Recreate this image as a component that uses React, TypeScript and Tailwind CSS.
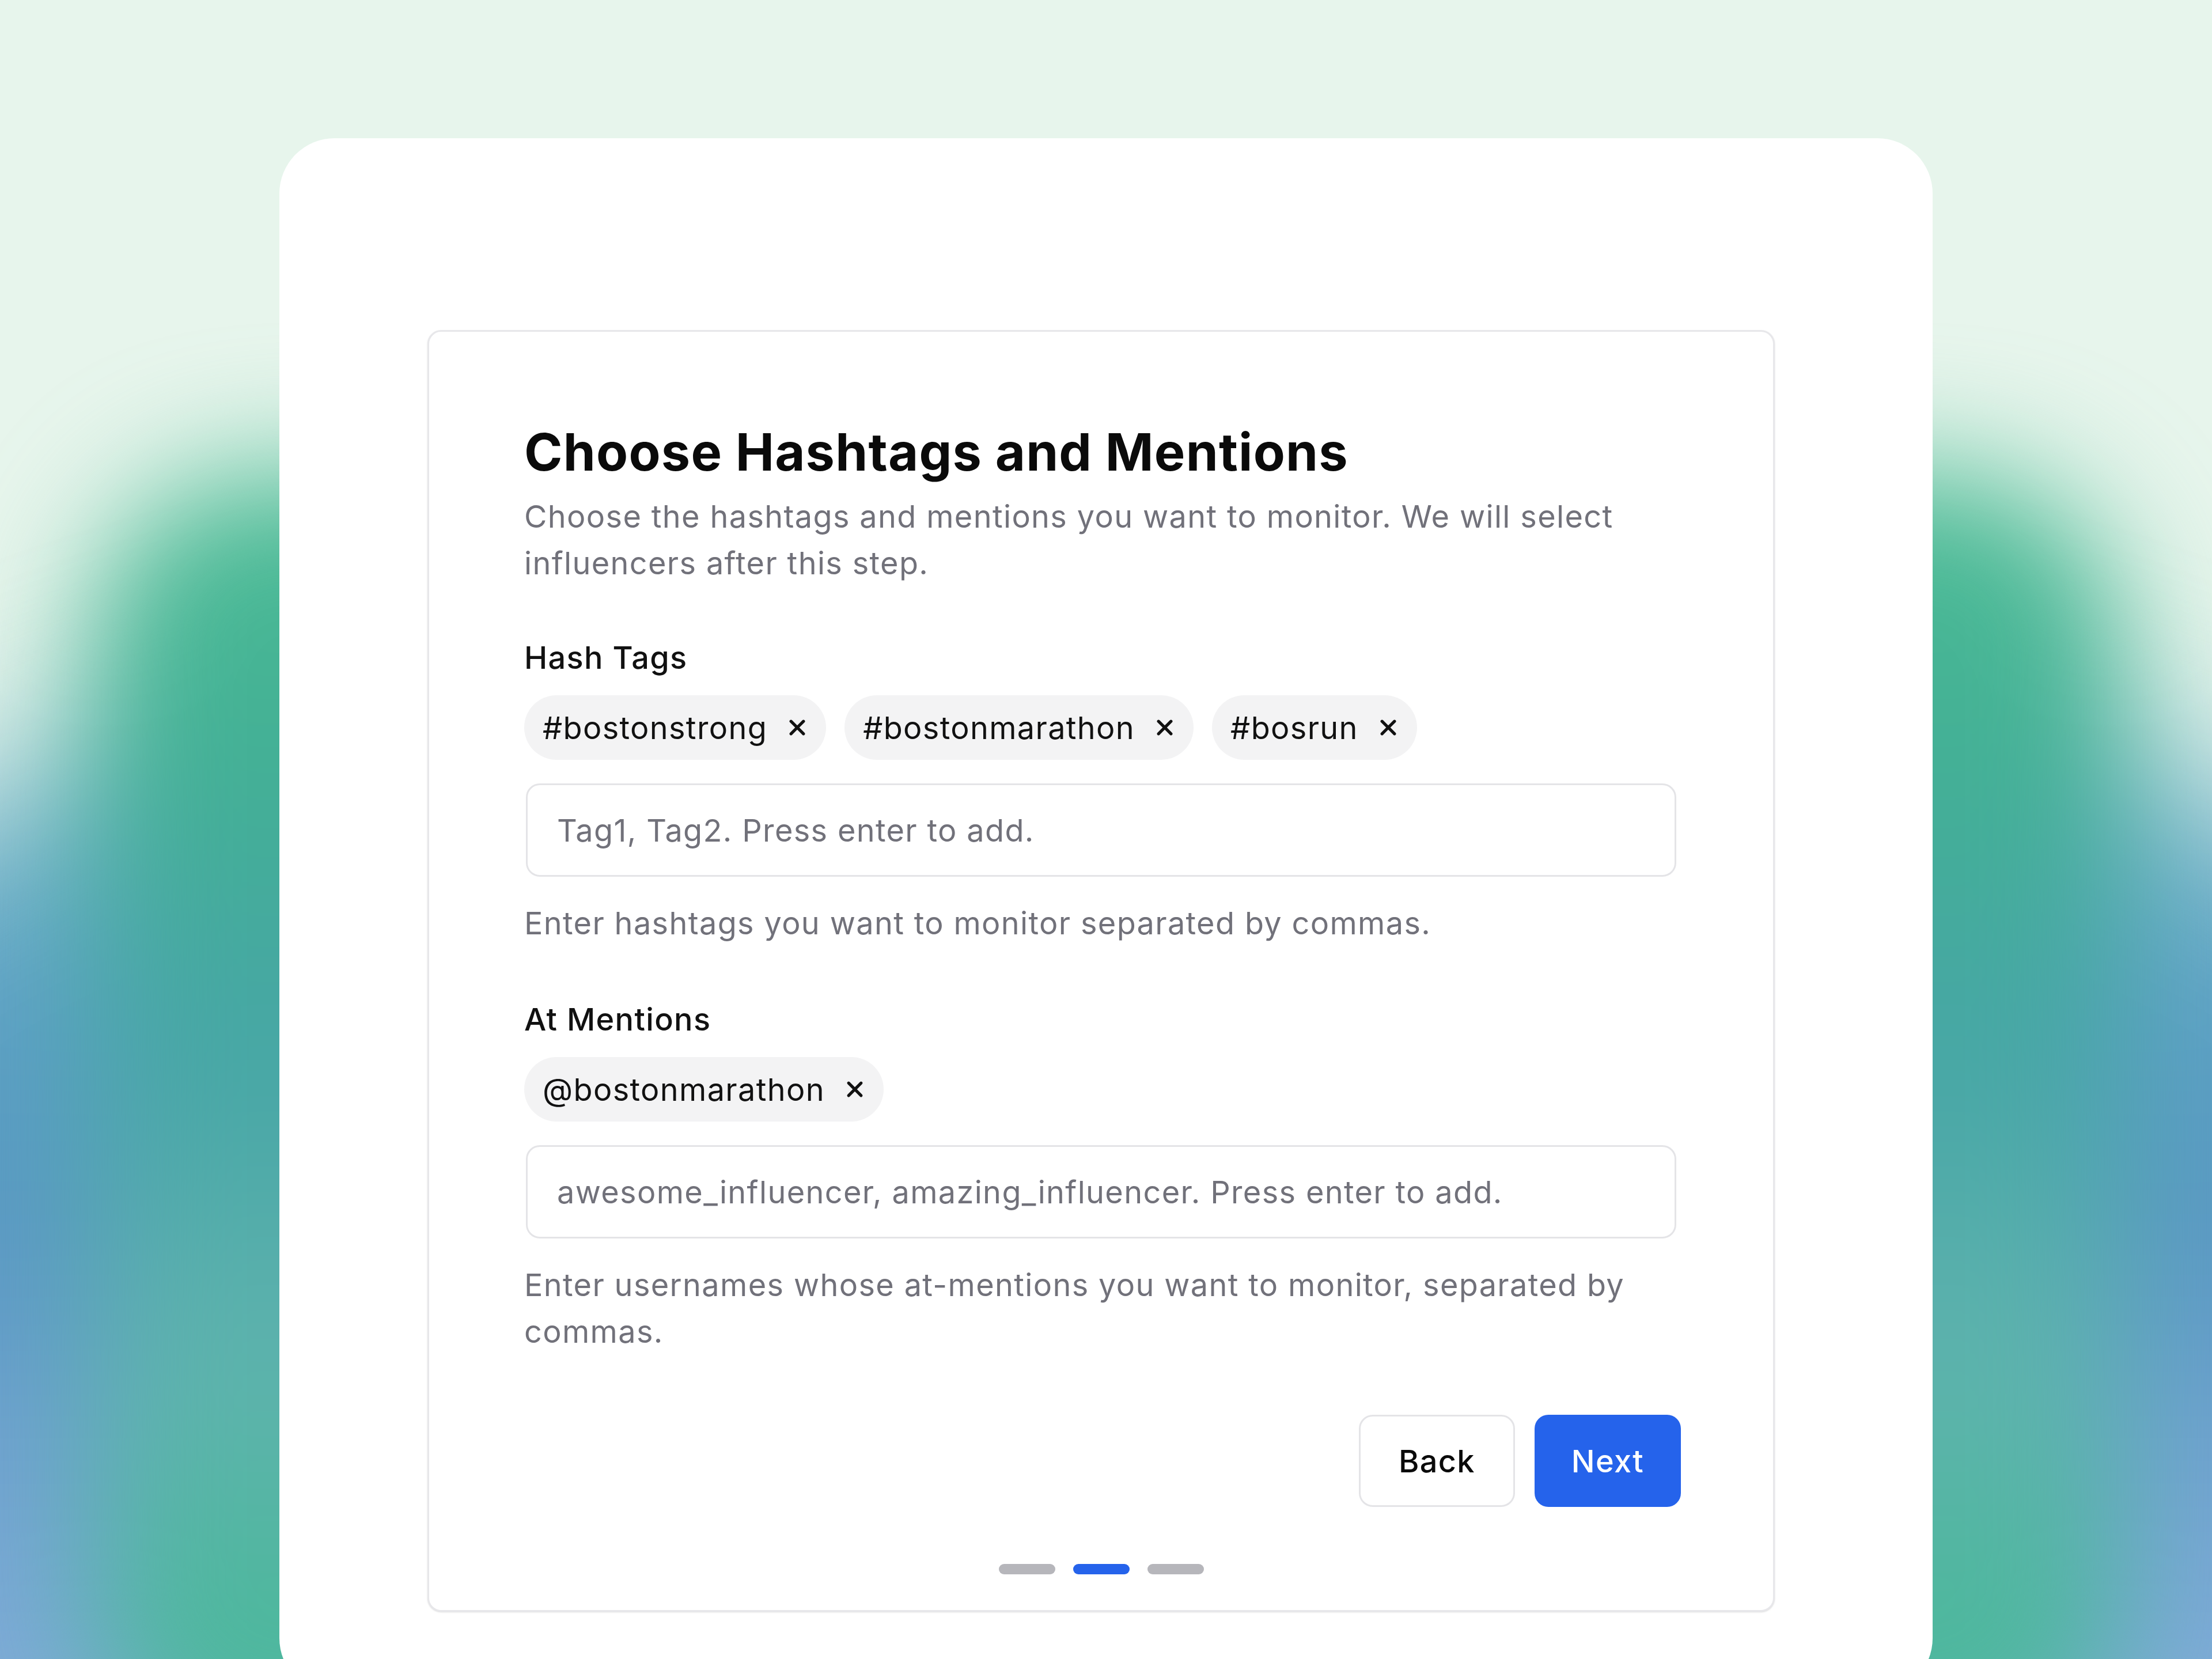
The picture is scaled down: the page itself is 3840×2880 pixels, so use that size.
import React, { useState } from 'react'

type Chip = { id: string; label: string }

const initialTags: Chip[] = [
  { id: 'h1', label: '#bostonstrong' },
  { id: 'h2', label: '#bostonmarathon' },
  { id: 'h3', label: '#bosrun' },
]

const initialMentions: Chip[] = [{ id: 'm1', label: '@bostonmarathon' }]

function CloseIcon() {
  return (
    <svg viewBox="0 0 24 24" className="w-[52px] h-[52px]" fill="none" stroke="currentColor" strokeWidth={2.4} strokeLinecap="round">
      <path d="M7 7l10 10M17 7L7 17" />
    </svg>
  )
}

function TagChip({ chip, onRemove }: { chip: Chip; onRemove: () => void }) {
  return (
    <span className="flex items-center h-[112px] pl-[32px] pr-[24px] gap-[26px] rounded-full bg-[#f3f3f4] text-[54px] leading-[81px] text-[#111111]">
      {chip.label}
      <button type="button" onClick={onRemove} className="flex items-center justify-center text-[#111111]">
        <CloseIcon />
      </button>
    </span>
  )
}

function TagField({
  label,
  chips,
  setChips,
  placeholder,
  help,
  prefix,
}: {
  label: string
  chips: Chip[]
  setChips: React.Dispatch<React.SetStateAction<Chip[]>>
  placeholder: string
  help: string
  prefix: string
}) {
  const [value, setValue] = useState('')

  const add = () => {
    const parts = value.split(',').map(p => p.trim()).filter(Boolean)
    if (!parts.length) return
    setChips(prev => [
      ...prev,
      ...parts.map((p, i) => ({ id: `${Date.now()}-${i}`, label: p.startsWith(prefix) ? p : prefix + p })),
    ])
    setValue('')
  }

  return (
    <div className="flex flex-col">
      <label className="text-[54px] leading-[81px] font-medium text-[#111111]">{label}</label>
      <div className="mt-[25px] flex flex-wrap gap-[32px]">
        {chips.map(c => (
          <TagChip key={c.id} chip={c} onRemove={() => setChips(prev => prev.filter(x => x.id !== c.id))} />
        ))}
      </div>
      <input
        value={value}
        onChange={e => setValue(e.target.value)}
        onKeyDown={e => { if (e.key === 'Enter') add() }}
        placeholder={placeholder}
        className="mt-[41px] mx-[3px] h-[162px] px-[51px] rounded-[24px] border-[3px] border-[#e4e4e7] bg-white text-[54px] tracking-[1.35px] text-[#111111] placeholder:text-[#71717a] outline-none"
      />
      <p className="mt-[40px] text-[54px] leading-[81px] text-[#71717a]">{help}</p>
    </div>
  )
}

export default function App() {
  const [tags, setTags] = useState<Chip[]>(initialTags)
  const [mentions, setMentions] = useState<Chip[]>(initialMentions)
  const step = 1

  return (
    <div className="relative w-full h-[2880px] overflow-hidden bg-[#e7f5ec] font-['Inter','Liberation_Sans',sans-serif] tracking-[1.35px]">
      {/* background glow */}
      <div className="absolute left-[-700px] right-[-700px] top-[1100px] bottom-[-900px] rounded-[40%] blur-[150px] bg-[linear-gradient(180deg,#86c4cb_0%,#5fa3c6_22%,#5897c2_38%,#74a4d3_55%,#86afdb_75%)]" />
      <div className="absolute left-[160px] right-[160px] top-[820px] bottom-[-200px] rounded-[300px] blur-[110px] bg-[linear-gradient(180deg,#4dbd95_0%,#43b095_22%,#47a6a6_45%,#5fb3ae_68%,#4db89c_90%)]" />

      <div className="relative mx-auto mt-[240px] w-[2870px] h-[2700px] rounded-[96px] bg-white pt-[333px]">
        <div className="ml-[257px] w-[2339px] rounded-[24px] border-[3px] border-[#e7e7ea] bg-white shadow-sm pt-[155px] pb-[62px] px-[165px]">
          <h1 className="text-[90px] leading-[108px] font-bold tracking-[1.2px] text-[#0a0a0a]">Choose Hashtags and Mentions</h1>
          <p className="mt-[17px] text-[54px] leading-[81px] text-[#71717a]">
            Choose the hashtags and mentions you want to monitor. We will select influencers after this step.
          </p>

          <div className="mt-[83px]">
            <TagField
              label="Hash Tags"
              chips={tags}
              setChips={setTags}
              prefix="#"
              placeholder="Tag1, Tag2. Press enter to add."
              help="Enter hashtags you want to monitor separated by commas."
            />
          </div>

          <div className="mt-[86px]">
            <TagField
              label="At Mentions"
              chips={mentions}
              setChips={setMentions}
              prefix="@"
              placeholder="awesome_influencer, amazing_influencer. Press enter to add."
              help="Enter usernames whose at-mentions you want to monitor, separated by commas."
            />
          </div>

          <div className="mt-[104px] mr-[-5px] flex justify-end gap-[34px]">
            <button className="h-[160px] px-[66px] rounded-[24px] border-[3px] border-[#e4e4e7] bg-white text-[54px] font-medium tracking-[1.35px] text-[#0a0a0a]">
              Back
            </button>
            <button className="h-[160px] px-[64px] rounded-[24px] bg-[#2563eb] text-[54px] font-medium tracking-[1.35px] text-white">
              Next
            </button>
          </div>

          <div className="mt-[99px] flex justify-center gap-[31px]">
            {[0, 1, 2].map(i => (
              <span key={i} className={i === step ? 'h-[18px] w-[98px] rounded-full bg-[#2563eb]' : 'h-[18px] w-[98px] rounded-full bg-[#b6b6bb]'} />
            ))}
          </div>
        </div>
      </div>
    </div>
  )
}
